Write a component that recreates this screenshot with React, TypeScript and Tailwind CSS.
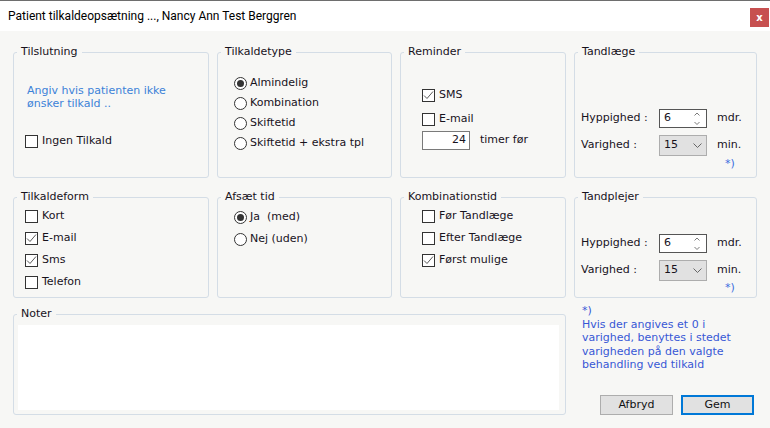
import React from 'react';
import clsx from 'clsx';

const Group: React.FC<{ title: string; className?: string; children?: React.ReactNode }> = ({ title, className, children }) => (
    <div className={clsx('relative rounded-[3px] border border-[#d4dde6]', className)}>
        <span className="absolute -top-[8px] left-[3px] bg-[#f7f7f5] px-[4px] leading-[13px] text-[#17121c]">{title}</span>
        {children}
    </div>
);

const Check: React.FC<{ checked?: boolean; label: string }> = ({ checked, label }) => (
    <div className="flex h-[22px] items-center gap-[4px]">
        <span className="flex h-[13px] w-[13px] shrink-0 items-center justify-center border border-[#333] bg-white">
            {checked && (
                <svg width="11" height="11" viewBox="0 0 11 11">
                    <path d="M1 5.5 L4 8.5 L10 1.5" fill="none" stroke="#5a5a5a" strokeWidth="1" />
                </svg>
            )}
        </span>
        <span className="whitespace-pre">{label}</span>
    </div>
);

const Radio: React.FC<{ checked?: boolean; label: string; h?: string }> = ({ checked, label, h = 'h-[20px]' }) => (
    <div className={clsx('flex items-center gap-[3px]', h)}>
        <span className="flex h-[13px] w-[13px] shrink-0 items-center justify-center rounded-full border border-[#333] bg-white">
            {checked && <span className="h-[7px] w-[7px] rounded-full bg-[#333]" />}
        </span>
        <span className="whitespace-pre">{label}</span>
    </div>
);

// hyppighed / varighed block, shared by Tandlæge and Tandplejer
const Interval: React.FC<{ top: string; noteGap: string }> = ({ top, noteGap }) => (
    <div className={clsx('pl-[6px]', top)}>
        <div className="grid grid-cols-[68px_48px_auto] items-center gap-x-[10px] gap-y-[7px]">
            <span>Hyppighed :</span>
            <div className="flex h-[19px] w-[48px] items-center justify-between border border-[#555] bg-white pl-[4px] pr-[6px]">
                <span>6</span>
                <svg width="6" height="13" viewBox="0 0 6 13">
                    <path d="M0.5 3.5 L3 1 L5.5 3.5 M0.5 10 L3 12.5 L5.5 10" fill="none" stroke="#7a7a7a" strokeWidth="1" />
                </svg>
            </div>
            <span>mdr.</span>
            <span>Varighed :</span>
            <div className="flex h-[21px] w-[48px] items-center justify-between border border-[#adadad] bg-[#e1e1e1] pl-[4px] pr-[4px]">
                <span>15</span>
                <svg width="9" height="5" viewBox="0 0 9 5">
                    <path d="M0.5 0.5 L4.5 4.5 L8.5 0.5" fill="none" stroke="#666" strokeWidth="1" />
                </svg>
            </div>
            <span>min.</span>
        </div>
        <div className={clsx('pl-[144px] leading-[13px] text-[#3a6ee0]', noteGap)}>*)</div>
    </div>
);

const Button: React.FC<{ label: string; primary?: boolean }> = ({ label, primary }) => (
    <button
        className={clsx(
            'flex h-[20px] w-[73px] items-center justify-center bg-[#e1e1e1] text-[#111]',
            primary ? 'border-2 border-[#0078d7]' : 'border border-[#adadad]'
        )}
    >
        {label}
    </button>
);

export default function App() {
    return (
        <div className="h-[428px] w-[770px] overflow-hidden bg-[#f7f7f5] font-['DejaVu_Sans',sans-serif] text-[11px] text-[#17121c]">
            {/* title bar */}
            <div className="flex h-[31px] border-t border-[#6e6e6e] bg-white pl-[8px] pr-[1px]">
                <span className="flex-1 self-center font-['Roboto',sans-serif] text-[12px] leading-[14px] text-black">
                    Patient tilkaldeopsætning ..., Nancy Ann Test Berggren
                </span>
                <div className="mt-[7px] flex h-[19px] w-[19px] items-center justify-center bg-[#c75050] text-[10px] font-bold leading-none text-white">
                    x
                </div>
            </div>

            <div className="pl-[13px] pt-[21px]">
                {/* row 1 */}
                <div className="grid h-[126px] grid-cols-[196px_175px_166px_183px] gap-x-[8px]">
                    <Group title="Tilslutning">
                        <p className="pl-[13px] pt-[31px] leading-[13px] text-[#3c82d8]">
                            Angiv hvis patienten ikke
                            <br />
                            ønsker tilkald ..
                        </p>
                        <div className="mt-[20px] pl-[11px]">
                            <Check label="Ingen Tilkald" />
                        </div>
                    </Group>
                    <Group title="Tilkaldetype">
                        <div className="pl-[16px] pt-[20px]">
                            <Radio checked label="Almindelig" />
                            <Radio label="Kombination" />
                            <Radio label="Skiftetid" />
                            <Radio label="Skiftetid + ekstra tpl" />
                        </div>
                    </Group>
                    <Group title="Reminder">
                        <div className="pl-[21px] pt-[30px]">
                            <div className="flex h-[24px] flex-col justify-center">
                                <Check checked label="SMS" />
                            </div>
                            <div className="flex h-[24px] flex-col justify-center">
                                <Check label="E-mail" />
                            </div>
                            <div className="flex items-center gap-[10px]">
                                <div className="flex h-[19px] w-[48px] items-center justify-end border border-[#7a7a7a] bg-white pr-[3px]">
                                    24
                                </div>
                                <span>timer før</span>
                            </div>
                        </div>
                    </Group>
                    <Group title="Tandlæge">
                        <Interval top="pt-[56px]" noteGap="mt-[1px]" />
                    </Group>
                </div>

                {/* row 2 */}
                <div className="mt-[19px] grid h-[101px] grid-cols-[196px_175px_166px_183px] gap-x-[8px]">
                    <Group title="Tilkaldeform">
                        <div className="pl-[11px] pt-[7px]">
                            <Check label="Kort" />
                            <Check checked label="E-mail" />
                            <Check checked label="Sms" />
                            <Check label="Telefon" />
                        </div>
                    </Group>
                    <Group title="Afsæt tid">
                        <div className="pl-[16px] pt-[8px]">
                            <Radio checked label="Ja  (med)" h="h-[22px]" />
                            <Radio label="Nej (uden)" h="h-[22px]" />
                        </div>
                    </Group>
                    <Group title="Kombinationstid">
                        <div className="pl-[21px] pt-[7px]">
                            <Check label="Før Tandlæge" />
                            <Check label="Efter Tandlæge" />
                            <Check checked label="Først mulige" />
                        </div>
                    </Group>
                    <Group title="Tandplejer">
                        <Interval top="pt-[36px]" noteGap="mt-[0px]" />
                    </Group>
                </div>

                {/* row 3 */}
                <div className="mt-[16px] grid h-[101px] grid-cols-[553px_183px] gap-x-[8px]">
                    <Group title="Noter" className="flex flex-col pb-[4px] pl-[4px] pr-[6px] pt-[10px]">
                        <div className="flex-1 bg-white" />
                    </Group>
                    <div className="flex flex-col justify-between">
                        <p className="-mt-[10px] pl-[8px] leading-[13.5px] text-[#3858d6]">
                            *)
                            <br />
                            Hvis der angives et 0 i
                            <br />
                            varighed, benyttes i stedet
                            <br />
                            varigheden på den valgte
                            <br />
                            behandling ved tilkald
                        </p>
                        <div className="flex justify-end gap-[8px] pr-[3px]">
                            <Button label="Afbryd" />
                            <Button label="Gem" primary />
                        </div>
                    </div>
                </div>
            </div>
        </div>
    );
}
